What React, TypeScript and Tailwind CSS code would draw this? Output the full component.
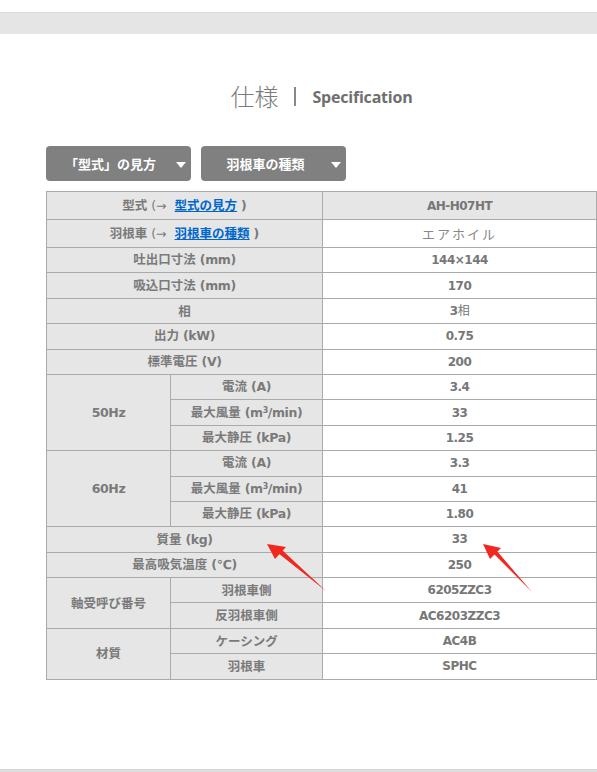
import React from 'react';

const jp = '"Noto Sans CJK JP", "Noto Sans", sans-serif';
const narrow = '"DejaVu Sans", "Noto Sans CJK JP", sans-serif';

function Label({ jpText, en }: { jpText: string; en?: React.ReactNode }) {
  return (
    <span>
      <span style={{ fontFamily: jp }}>{jpText}</span>
      {en && <span style={{ fontFamily: narrow }} className="ml-1 tracking-[-0.4px]">{en}</span>}
    </span>
  );
}

const m3 = <>(m<sup className="text-[8px]">3</sup>/min)</>;

function Val({ children }: { children: React.ReactNode }) {
  return (
    <td className="border border-[#aaa] text-center text-[12px] text-[#777] font-semibold tracking-[-0.5px]" style={{ fontFamily: narrow }}>
      {children}
    </td>
  );
}

function Head({ children, colSpan, rowSpan }: { children: React.ReactNode; colSpan?: number; rowSpan?: number }) {
  return (
    <td colSpan={colSpan} rowSpan={rowSpan} className="border border-[#aaa] bg-[#e6e6e6] text-center text-[12.5px] font-bold text-[#7a7a7a]">
      {children}
    </td>
  );
}

function Btn({ label }: { label: string }) {
  return (
    <button className="relative h-[35px] w-[145px] rounded-[4px] bg-[#808080] text-white text-[13px] font-bold flex items-center pl-2 pr-6" style={{ fontFamily: jp }}>
      <span className="flex-1 text-center">{label}</span>
      <span className="absolute right-[5px] top-[16px] w-0 h-0 border-l-[5px] border-r-[5px] border-t-[6px] border-l-transparent border-r-transparent border-t-white" />
    </button>
  );
}

export default function App() {
  const tall = 'h-[28px]';
  const row = 'h-[25.4px]';
  return (
    <div className="relative w-[597px] h-[772px] bg-white overflow-hidden">
      <div className="h-[12px]" />
      <div className="h-[22px] bg-[#e5e5e5] border-t border-[#dcdcdc]" />

      {/* title */}
      <div className="mt-[46px] pl-[46px] flex items-center justify-center text-[#7a7a7a]">
        <span className="text-[24px] leading-[32px] font-light" style={{ fontFamily: jp }}>仕様</span>
        <span className="mx-[16px] w-[2px] h-[19px] bg-[#888]" />
        <span className="text-[16px] font-bold text-[#6f6f6f] mt-[2px]" style={{ fontFamily: '"Open Sans", sans-serif', letterSpacing: '-0.2px' }}>Specification</span>
      </div>

      <div className="mt-[34px] ml-[46px] flex gap-[10px]">
        <Btn label="「型式」の見方" />
        <Btn label="羽根車の種類" />
      </div>

      <table className="mt-[10px] ml-[46px] w-[550px] border-collapse table-fixed" style={{ fontFamily: jp }}>
        <colgroup>
          <col className="w-[124px]" />
          <col className="w-[152px]" />
          <col className="w-[274px]" />
        </colgroup>
        <tbody>
          <tr className={tall}>
            <Head colSpan={2}>
              <span>型式</span>
              <span className="ml-1 font-normal" style={{ fontFamily: narrow }}>(→ </span>
              <a className="ml-1 text-[#0066cc] underline">型式の見方</a>
              <span className="ml-1" style={{ fontFamily: narrow }}>)</span>
            </Head>
            <td className="border border-[#aaa] bg-[#e6e6e6] text-center text-[12px] font-bold text-[#777] tracking-[-0.5px]" style={{ fontFamily: narrow }}>AH-H07HT</td>
          </tr>
          <tr className={tall}>
            <Head colSpan={2}>
              <span>羽根車</span>
              <span className="ml-1 font-normal" style={{ fontFamily: narrow }}>(→ </span>
              <a className="ml-1 text-[#0066cc] underline">羽根車の種類</a>
              <span className="ml-1" style={{ fontFamily: narrow }}>)</span>
            </Head>
            <td className="border border-[#aaa] text-center text-[13px] text-[#888] tracking-[2px]">エアホイル</td>
          </tr>
          <tr className={row}><Head colSpan={2}><Label jpText="吐出口寸法" en="(mm)" /></Head><Val>144×144</Val></tr>
          <tr className={row}><Head colSpan={2}><Label jpText="吸込口寸法" en="(mm)" /></Head><Val>170</Val></tr>
          <tr className={row}><Head colSpan={2}><Label jpText="相" /></Head><Val>3<span style={{ fontFamily: jp }} className="font-normal">相</span></Val></tr>
          <tr className={row}><Head colSpan={2}><Label jpText="出力" en="(kW)" /></Head><Val>0.75</Val></tr>
          <tr className={row}><Head colSpan={2}><Label jpText="標準電圧" en="(V)" /></Head><Val>200</Val></tr>

          <tr className={row}>
            <Head rowSpan={3}><span className="tracking-[-0.4px]" style={{ fontFamily: narrow }}>50Hz</span></Head>
            <Head><Label jpText="電流" en="(A)" /></Head><Val>3.4</Val>
          </tr>
          <tr className={row}><Head><Label jpText="最大風量" en={m3} /></Head><Val>33</Val></tr>
          <tr className={row}><Head><Label jpText="最大静圧" en="(kPa)" /></Head><Val>1.25</Val></tr>

          <tr className={row}>
            <Head rowSpan={3}><span className="tracking-[-0.4px]" style={{ fontFamily: narrow }}>60Hz</span></Head>
            <Head><Label jpText="電流" en="(A)" /></Head><Val>3.3</Val>
          </tr>
          <tr className={row}><Head><Label jpText="最大風量" en={m3} /></Head><Val>41</Val></tr>
          <tr className={row}><Head><Label jpText="最大静圧" en="(kPa)" /></Head><Val>1.80</Val></tr>

          <tr className={row}><Head colSpan={2}><Label jpText="質量" en="(kg)" /></Head><Val>33</Val></tr>
          <tr className={row}><Head colSpan={2}><Label jpText="最高吸気温度" en="(℃)" /></Head><Val>250</Val></tr>

          <tr className={row}>
            <Head rowSpan={2}>軸受呼び番号</Head>
            <Head>羽根車側</Head><Val>6205ZZC3</Val>
          </tr>
          <tr className={row}><Head>反羽根車側</Head><Val>AC6203ZZC3</Val></tr>

          <tr className={row}>
            <Head rowSpan={2}>材質</Head>
            <Head>ケーシング</Head><Val>AC4B</Val>
          </tr>
          <tr className={row}><Head>羽根車</Head><Val>SPHC</Val></tr>
        </tbody>
      </table>

      <div className="absolute left-0 right-0 top-[769px] h-[3px] bg-[#e0e0e0] border-t border-[#d4d4d4]" />

      {/* annotation arrows */}
      <svg className="absolute left-0 top-0 pointer-events-none" width="597" height="772">
        <path d="M326,591 L278,553 L281,549 Z M267,544 L286,547 L275,559 Z" fill="#f0281e" />
        <path d="M532,592 L493,553 L496,550 Z M483,544 L501,548 L490,559 Z" fill="#f0281e" />
      </svg>
    </div>
  );
}
